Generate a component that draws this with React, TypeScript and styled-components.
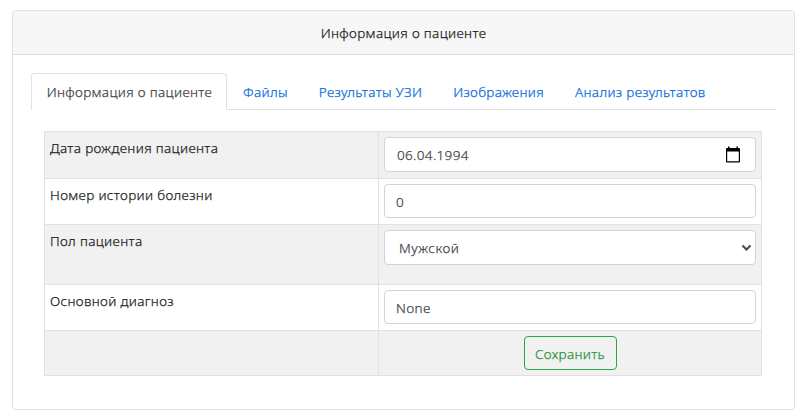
import React from "react";
import styled, { createGlobalStyle, css } from "styled-components";

const GlobalStyle = createGlobalStyle`
  *, *::before, *::after { box-sizing: border-box; }
  body {
    margin: 0;
    background: #fff;
    color: #1b1f23;
    font-family: "Noto Sans", "Open Sans", sans-serif;
    font-size: 13.5px;
    font-weight: 300;
    line-height: 21px;
    letter-spacing: 0.35px;
    -webkit-text-stroke: 0.25px currentColor;
  }
`;

const Page = styled.main`
  padding: 10px 9px 7px 12px;
`;

const Card = styled.section`
  height: 400px;
  border: 1px solid #dfdfdf;
  border-radius: 4px;
  overflow: hidden;
`;

const CardHeader = styled.header`
  height: 44px;
  padding-top: 12px;
  text-align: center;
  background: #f7f7f7;
  border-bottom: 1px solid #dfdfdf;
`;

const CardBody = styled.div`
  padding: 18px 18px 0;
`;

const Tabs = styled.nav`
  display: flex;
  height: 37px;
  border-bottom: 1px solid #dee2e6;
`;

const Tab = styled.a<{ $active?: boolean }>`
  height: 37px;
  padding: 8px 14.2px 0 14.7px;
  border: 1px solid transparent;
  border-radius: 4px 4px 0 0;
  color: #0a6ce0;
  text-decoration: none;
  white-space: nowrap;
  ${(p) =>
    p.$active &&
    css`
      color: #40464c;
      background: #fff;
      border-color: #dee2e6 #dee2e6 #fff;
    `}
`;

const FormTable = styled.form`
  margin: 21px 14px 0 13px;
  border: 1px solid #dee2e6;
  border-bottom: 0;
`;

const Row = styled.div<{ $height: number; $striped?: boolean }>`
  display: grid;
  grid-template-columns: 334px 1fr;
  height: ${(p) => p.$height}px;
  border-bottom: 1px solid #dee2e6;
  background: ${(p) => (p.$striped ? "#f1f1f1" : "#fff")};
`;

const LabelCell = styled.label`
  padding: 6px 5px 0;
  border-right: 1px solid #dee2e6;
`;

const FieldCell = styled.div<{ $center?: boolean }>`
  padding: 5px;
  text-align: ${(p) => (p.$center ? "center" : "left")};
`;

const control = css`
  display: block;
  width: 100%;
  border: 1px solid #ced4da;
  border-radius: 4px;
  background: #fff;
  color: #40464c;
  font: inherit;
  letter-spacing: inherit;
`;

const TextInput = styled.input`
  ${control}
  height: 34px;
  padding: 2px 11px 0;
`;

const DateField = styled.div`
  ${control}
  display: flex;
  justify-content: space-between;
  height: 35px;
  padding: 7px 14px 0 12px;
`;

const SelectWrap = styled.div`
  display: grid;
  align-items: center;
  > * { grid-area: 1 / 1; }
`;

const Select = styled.select`
  ${control}
  height: 35px;
  padding: 2px 24px 0 14px;
  letter-spacing: 0.55px;
  appearance: none;
`;

const Chevron = styled.svg`
  justify-self: end;
  margin-right: 4px;
  pointer-events: none;
`;

const SaveButton = styled.button`
  width: 93px;
  height: 34px;
  padding: 2px 0 0;
  border: 1px solid #28a745;
  border-radius: 4px;
  background: transparent;
  color: #2b9443;
  font: inherit;
  letter-spacing: inherit;
`;

const CalendarIcon = () => (
  <svg width="16" height="18" viewBox="0 0 16 18" aria-hidden="true">
    <path
      fill="#000"
      fillRule="evenodd"
      d="M3 1.500h1.500v1.500h7V1.500H13V3h1a1 1 0 0 1 1 1V16.500a1 1 0 0 1-1 1H2a1 1 0 0 1-1-1V4a1 1 0 0 1 1-1h1zM2.200 6.500v9.800h11.600V6.500z"
    />
  </svg>
);

const tabs = ["Информация о пациенте", "Файлы", "Результаты УЗИ", "Изображения", "Анализ результатов"];

export default function App() {
  return (
    <>
      <GlobalStyle />
      <Page>
        <Card>
          <CardHeader>Информация о пациенте</CardHeader>
          <CardBody>
            <Tabs>
              {tabs.map((name, i) => (
                <Tab key={name} href="#" $active={i === 0}>
                  {name}
                </Tab>
              ))}
            </Tabs>
            <FormTable>
              <Row $height={47} $striped>
                <LabelCell>Дата рождения пациента</LabelCell>
                <FieldCell>
                  <DateField>
                    <span>06.04.1994</span>
                    <CalendarIcon />
                  </DateField>
                </FieldCell>
              </Row>
              <Row $height={46}>
                <LabelCell htmlFor="history">Номер истории болезни</LabelCell>
                <FieldCell>
                  <TextInput id="history" defaultValue="0" />
                </FieldCell>
              </Row>
              <Row $height={60} $striped>
                <LabelCell htmlFor="sex">Пол пациента</LabelCell>
                <FieldCell>
                  <SelectWrap>
                    <Select id="sex" defaultValue="m">
                      <option value="m">Мужской</option>
                      <option value="f">Женский</option>
                    </Select>
                    <Chevron width="11" height="8" viewBox="0 0 11 8" aria-hidden="true">
                      <path d="M1.500 1.500L5.500 5.500L9.500 1.500" fill="none" stroke="#444b52" strokeWidth="2.100" />
                    </Chevron>
                  </SelectWrap>
                </FieldCell>
              </Row>
              <Row $height={46}>
                <LabelCell htmlFor="diagnosis">Основной диагноз</LabelCell>
                <FieldCell>
                  <TextInput id="diagnosis" defaultValue="None" />
                </FieldCell>
              </Row>
              <Row $height={45} $striped>
                <LabelCell as="div" />
                <FieldCell $center>
                  <SaveButton type="button">Сохранить</SaveButton>
                </FieldCell>
              </Row>
            </FormTable>
          </CardBody>
        </Card>
      </Page>
    </>
  );
}
